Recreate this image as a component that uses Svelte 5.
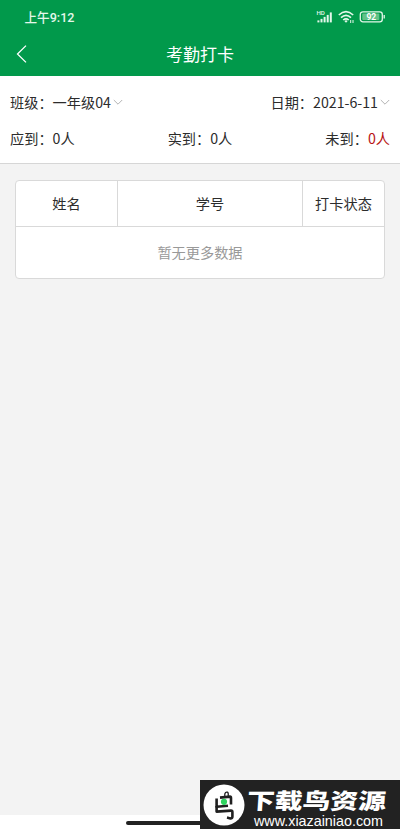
<script lang="ts">
	interface Student {
		name: string;
		no: string;
		status: string;
	}

	let className = $state('一年级04');
	let date = $state('2021-6-11');
	let students: Student[] = $state([]);

	const battery = 92;
	const bars = [2, 3.5, 5.5, 7.5, 10];

	let arrived = $derived(students.filter((s) => s.status === '已打卡').length);
	let absent = $derived(students.length - arrived);
</script>

{#snippet chevron()}
	<svg class="chevron" width="10" height="7" viewBox="0 0 10 7">
		<path d="M0.8 1 L5 5.2 L9.2 1" fill="none" stroke="#aaa" stroke-width="0.9" />
	</svg>
{/snippet}

<div class="page">
	<header>
		<div class="status">
			<span class="time">上午9:12</span>
			<div class="icons">
				<!-- 信号 -->
				<svg width="18" height="14" viewBox="0 0 18 14">
					<text x="0.4" y="5" class="hd">HD</text>
					{#each bars as h, i}
						<rect x={1.4 + i * 3.1} y={12.4 - h} width="2" height={h} fill="#e4f7ea" />
					{/each}
				</svg>
				<!-- 无线网络 -->
				<svg class="wifi" width="17" height="14" viewBox="0 0 17 14">
					<g fill="none" stroke="#e4f7ea" stroke-width="1.6">
						<path d="M0.8 5 Q8 -1.8 15.2 5" />
						<path d="M3 7.6 Q8 3 13 7.6" />
						<path d="M5.2 10 Q8 7.6 10.8 10" />
					</g>
					<path d="M6.3 11 Q8 9.6 9.7 11 L8 12.8 Z" fill="#e4f7ea" />
					<path d="M12.7 10 V13 M15 10 V13" stroke="#e4f7ea" stroke-width="1" />
				</svg>
				<!-- 电量 -->
				<svg class="battery" width="27" height="12" viewBox="0 0 27 12">
					<rect x="1.3" y="0.8" width="22" height="10" rx="2.6" fill="none" stroke="#e4f7ea" stroke-width="1.3" />
					<rect x="3.3" y="2.6" width="17" height="6.4" rx="0.8" fill="#62c288" />
					<path d="M25.2 4 V7.6" stroke="#e4f7ea" stroke-width="1.3" />
					<text x="12.3" y="8.9" class="level">{battery}</text>
				</svg>
			</div>
		</div>
		<div class="nav">
			<svg class="back" width="12" height="20" viewBox="0 0 12 20">
				<path d="M10 1.6 L1.5 10 L10 18.4" fill="none" stroke="#fff" stroke-width="1.3" />
			</svg>
			<h1>考勤打卡</h1>
		</div>
	</header>

	<section class="summary">
		<div class="row">
			<span>班级：{className}{@render chevron()}</span>
			<span>日期：{date}{@render chevron()}</span>
		</div>
		<div class="row">
			<span>应到：{students.length}人</span>
			<span>实到：{arrived}人</span>
			<span>未到：<em>{absent}人</em></span>
		</div>
	</section>

	<main>
		<div class="table">
			<div class="line">
				<span>姓名</span>
				<span>学号</span>
				<span>打卡状态</span>
			</div>
			{#each students as s}
				<div class="line">
					<span>{s.name}</span>
					<span>{s.no}</span>
					<span>{s.status}</span>
				</div>
			{:else}
				<div class="empty">暂无更多数据</div>
			{/each}
		</div>
	</main>

	<footer>
		<div class="home"></div>
	</footer>

	<!-- 右下角水印 -->
	<div class="mark">
		<svg width="200" height="49" viewBox="0 0 200 49">
			<circle cx="24" cy="25" r="20.5" fill="#fff" />
			<g fill="none" stroke="#202020" stroke-width="2.6" stroke-linejoin="round">
				<path d="M24.8 17 V14 Q25.4 11.8 27.4 12.2 Q28.6 12.8 28.2 16" stroke-width="1.3" />
				<path d="M20 17.6 L30 16.6 Q31 16.6 31 18 V24.6" />
				<path d="M16.6 18.5 V26.8 L28 25.8" />
				<path d="M16.6 26 V31.6 L31 30.6 Q32.4 30.6 32.4 32 V36.6 Q32.4 38.6 30.4 38.4 L27 37.6" />
			</g>
			<circle cx="24" cy="21.8" r="3.1" fill="#2fd45f" />
			<text x="48.5" y="29" class="brand" textLength="139" lengthAdjust="spacingAndGlyphs" transform="skewX(-4)">下载鸟资源</text>
			<text x="54" y="45.8" class="site" textLength="129" lengthAdjust="spacingAndGlyphs">www.xiazainiao.com</text>
		</svg>
	</div>
</div>

<style>
	:global(body) {
		margin: 0;
	}
	.page {
		position: relative;
		box-sizing: border-box;
		display: flex;
		flex-direction: column;
		height: 831px;
		overflow: hidden;
		background: #f3f3f3;
		color: #2c2c2c;
		font-family: 'Noto Sans CJK SC', sans-serif;
		font-size: 14.2px;
	}
	header {
		box-sizing: border-box;
		height: 76px;
		background: #01994b;
		color: #fff;
	}
	.status {
		display: flex;
		align-items: center;
		justify-content: space-between;
		height: 34px;
		padding: 0 14px 0 24.5px;
	}
	.time {
		padding-bottom: 2px;
		font-family: Roboto, 'Noto Sans CJK SC', sans-serif;
		font-size: 12.6px;
		font-weight: 500;
		color: #e4f7ea;
	}
	.icons {
		display: flex;
		align-items: center;
	}
	.wifi {
		margin-left: 4px;
	}
	.battery {
		margin-left: 4px;
	}
	.hd {
		font: 500 6.2px Roboto, sans-serif;
		fill: #e4f7ea;
	}
	.level {
		font: 700 8.5px Roboto, sans-serif;
		fill: #fff;
		text-anchor: middle;
	}
	.nav {
		display: grid;
		grid-template-columns: 40px 1fr 40px;
		align-items: center;
		height: 40px;
	}
	.back {
		margin-left: 16px;
	}
	h1 {
		margin: 0;
		font-size: 17px;
		font-weight: 400;
		line-height: 24px;
		text-align: center;
	}
	.summary {
		box-sizing: border-box;
		height: 88px;
		padding: 8px 10px 0;
		border-bottom: 1px solid #d6d6d6;
		background: #fff;
	}
	.row {
		display: flex;
		justify-content: space-between;
		height: 36px;
		line-height: 36px;
	}
	.chevron {
		margin-left: 2px;
		vertical-align: 2px;
	}
	em {
		font-style: normal;
		color: #b81414;
	}
	main {
		flex: 1;
		padding: 16px 15px;
	}
	.table {
		border: 1px solid #d9d9d9;
		border-radius: 4px;
		background: #fff;
	}
	.line {
		display: grid;
		grid-template-columns: 101px 185px 1fr;
		height: 45px;
		border-bottom: 1px solid #d9d9d9;
		line-height: 45px;
		text-align: center;
	}
	.line span + span {
		border-left: 1px solid #d9d9d9;
	}
	.empty {
		height: 51px;
		line-height: 51px;
		text-align: center;
		color: #999;
	}
	footer {
		display: flex;
		justify-content: center;
		height: 16px;
		background: #fff;
	}
	.home {
		width: 148px;
		height: 4px;
		margin-top: 6px;
		border-radius: 2px;
		background: #222;
	}
	.mark {
		position: absolute;
		right: 0;
		bottom: 2px;
		width: 200px;
		height: 49px;
		background: #222;
	}
	.brand {
		font: 900 22px 'Noto Sans CJK SC', sans-serif;
		fill: #fff;
	}
	.site {
		font: 14.5px 'Liberation Sans', sans-serif;
		fill: #fff;
	}
</style>
